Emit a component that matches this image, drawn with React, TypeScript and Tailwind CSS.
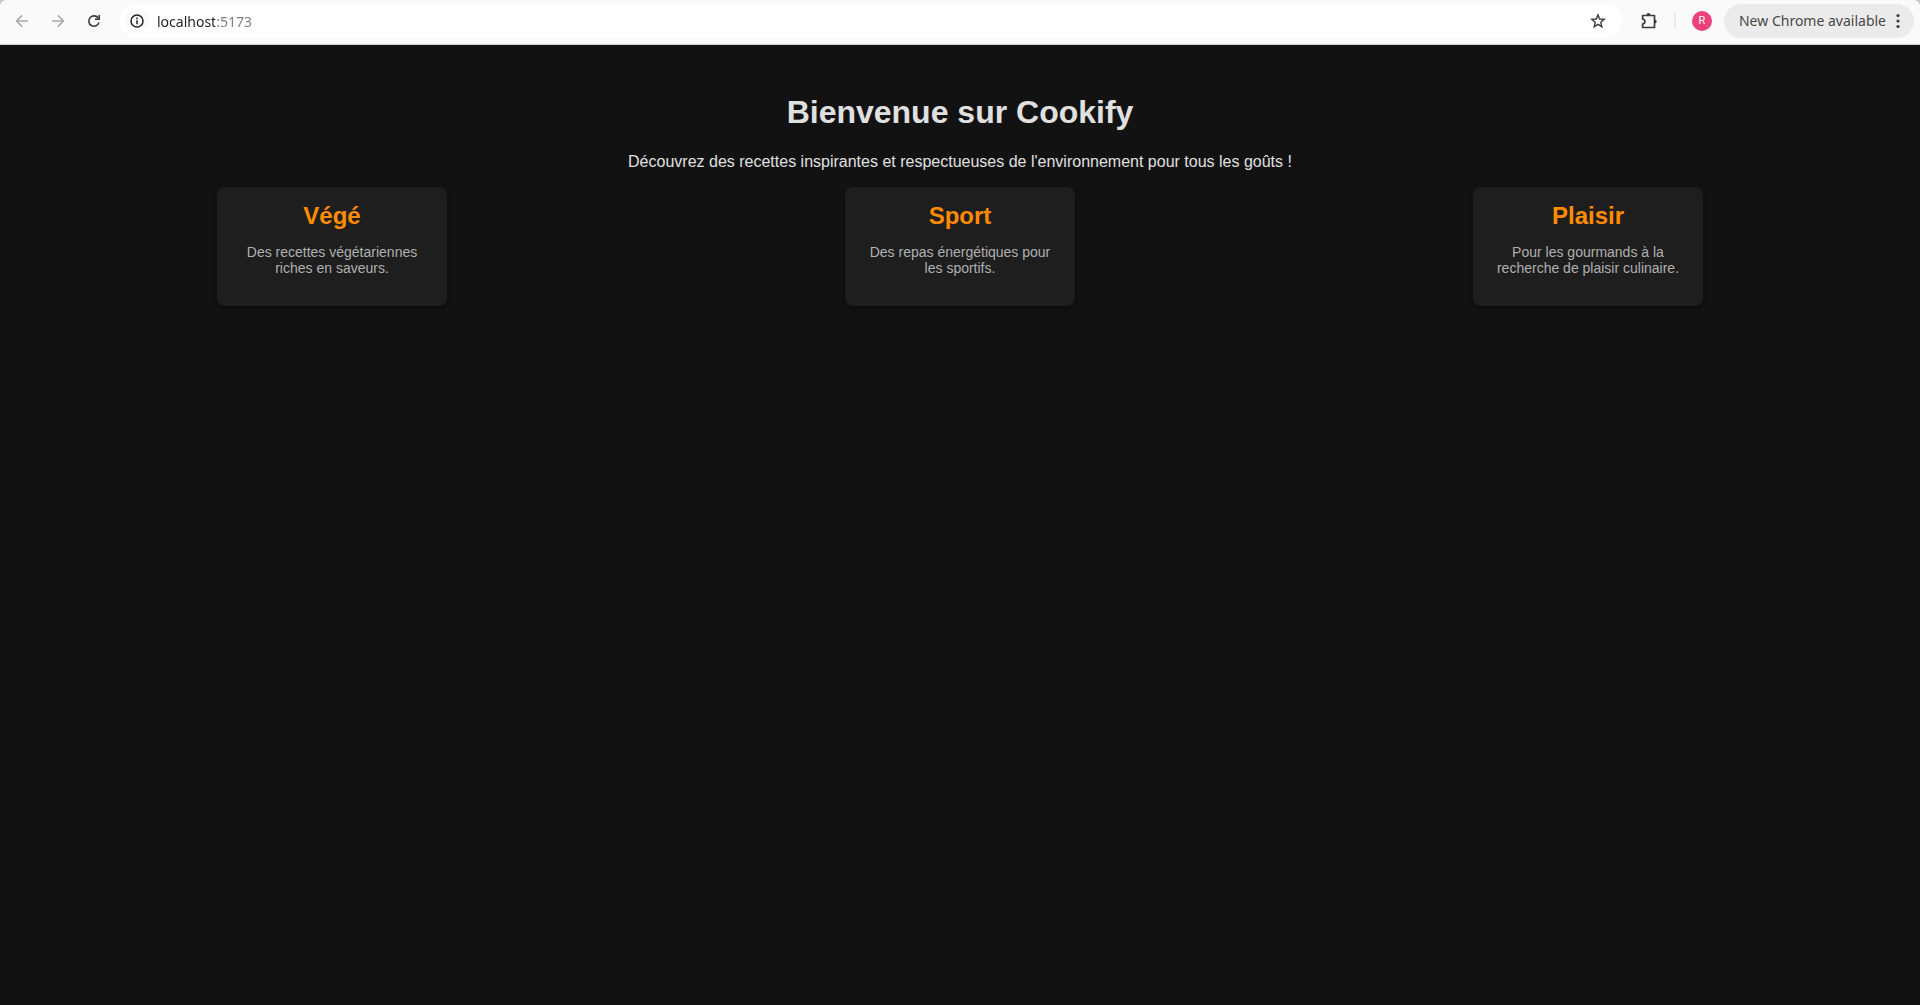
import type { ReactNode } from "react";

const categories = [
  { title: "Végé", text: "Des recettes végétariennes riches en saveurs." },
  { title: "Sport", text: "Des repas énergétiques pour les sportifs." },
  { title: "Plaisir", text: "Pour les gourmands à la recherche de plaisir culinaire." },
];

function IconButton({ label, disabled, children }: { label: string; disabled?: boolean; children: ReactNode }) {
  return (
    <button
      type="button"
      aria-label={label}
      disabled={disabled}
      className="flex size-7 items-center justify-center rounded-full text-[#3c3c3c] disabled:text-[#ababab]"
    >
      {children}
    </button>
  );
}

function BrowserBar() {
  return (
    <div className="bg-[#c4c4c4]">
      <header className="flex h-[45px] items-center gap-2 rounded-t-md border-b border-[#d0d0d0] bg-[#fafafa] pr-1.5 pb-0.5 pl-2 font-['Noto_Sans',sans-serif] text-sm">
        <div className="flex items-center gap-2">
          <IconButton label="Back" disabled>
            <svg viewBox="0 0 16 16" className="size-4" fill="none" stroke="currentColor" strokeWidth="1.7">
              <path d="M14 8H3M8.2 2.4 2.6 8l5.6 5.6" />
            </svg>
          </IconButton>
          <IconButton label="Forward" disabled>
            <svg viewBox="0 0 16 16" className="size-4" fill="none" stroke="currentColor" strokeWidth="1.7">
              <path d="M2 8h11M7.8 2.4 13.4 8l-5.6 5.6" />
            </svg>
          </IconButton>
          <IconButton label="Reload">
            <svg viewBox="0 0 16 16" className="size-4" fill="none" stroke="currentColor" strokeWidth="1.6">
              <path d="M12.4 5.3A5.2 5.2 0 1 0 13 9.4" />
              <path d="M13.2 2v4.3H8.9" />
            </svg>
          </IconButton>
        </div>
        <div className="ml-1 flex h-[34px] flex-1 items-center rounded-full bg-white pr-2.5 pl-[5px]">
          <button
            type="button"
            aria-label="Site information"
            className="flex size-6 items-center justify-center rounded-full bg-[#fafafa] text-[#242424]"
          >
            <svg viewBox="0 0 16 16" className="size-4" fill="none" stroke="currentColor" strokeWidth="1.5">
              <circle cx="8" cy="8" r="6" />
              <path d="M8 7.2v4M8 4.6v1.6" />
            </svg>
          </button>
          <input
            type="text"
            aria-label="Address"
            defaultValue="localhost:5173"
            className="ml-2 h-6 min-w-0 flex-1 bg-[linear-gradient(90deg,#1f1f1f_58px,#7c7c7c_58px)] bg-clip-text text-transparent outline-none"
          />
          <IconButton label="Bookmark this page">
            <svg viewBox="0 0 16 16" className="size-4" fill="none" stroke="currentColor" strokeWidth="1.4">
              <path d="m8 1.9 1.700 4.100 4.500.4-3.400 2.900 1 4.400L8 11.400l-3.800 2.300 1-4.400L1.800 6.400l4.500-.4z" />
            </svg>
          </IconButton>
        </div>
        <div className="flex items-center gap-2 pl-[5px]">
          <IconButton label="Extensions">
            <svg viewBox="0 0 18 18" className="size-[18px]" fill="none" stroke="currentColor" strokeWidth="1.7">
              <path d="M2.6 3.5h11.9v12H2.6v-3.300c1.400-.3 2.300-1.200 2.300-2.600S4 7.200 2.600 6.900z" strokeLinejoin="round" />
              <path d="M6.400 3.200a2.100 2.100 0 0 1 4.200 0zM14.600 7.400a2.100 2.100 0 0 1 0 4.200z" fill="currentColor" stroke="none" />
            </svg>
          </IconButton>
          <div className="ml-[3px] h-4 w-0.5 bg-[#ebebeb]" />
          <button
            type="button"
            aria-label="Profile"
            className="mr-1 ml-2 flex size-5 items-center justify-center rounded-full bg-[#ec407a] font-['Roboto',sans-serif] text-[11px] text-white"
          >
            R
          </button>
          <button
            type="button"
            className="flex h-[34px] items-center gap-1 rounded-full bg-[#ebebeb] pr-2 pl-[15px] text-[#474747]"
          >
            <span>New Chrome available</span>
            <svg viewBox="0 0 16 16" className="size-4" fill="#3c3c3c">
              <circle cx="8" cy="2.5" r="1.6" />
              <circle cx="8" cy="8" r="1.6" />
              <circle cx="8" cy="13.5" r="1.6" />
            </svg>
          </button>
        </div>
      </header>
    </div>
  );
}

export default function App() {
  return (
    <div className="flex min-h-screen flex-col bg-[#121212] font-['Liberation_Sans',Arial,sans-serif] text-[#e0e0e0]">
      <BrowserBar />
      <main className="px-[18px] pt-[49px] text-center">
        <h1 className="text-[32px] leading-9 font-bold">Bienvenue sur Cookify</h1>
        <p className="mt-[23px] text-base leading-[18px]">
          Découvrez des recettes inspirantes et respectueuses de l'environnement pour tous les goûts !
        </p>
        <section className="mt-4 flex flex-wrap justify-around">
          {categories.map((category) => (
            <article key={category.title} className="w-[230px] rounded-lg bg-[#1e1e1e] px-4 pt-[15px] pb-[30px] shadow-[0_2px_5px_rgba(0,0,0,0.4)]">
              <h2 className="text-2xl leading-7 font-bold text-[#ff8c00]">{category.title}</h2>
              <p className="mt-3.5 text-sm leading-4 text-[#b0b0b0]">{category.text}</p>
            </article>
          ))}
        </section>
      </main>
    </div>
  );
}
